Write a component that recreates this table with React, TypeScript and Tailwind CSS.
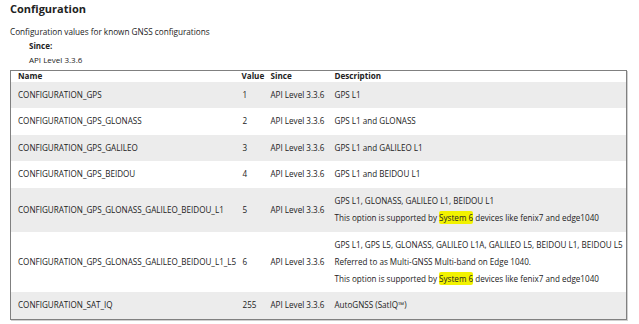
import React from "react";

const HL = ({ children }: { children: React.ReactNode }) => (
  <span className="bg-[#f2f200] rounded-[2px] py-[1px]">{children}</span>
);

type Row = { name: string; value: string; desc: React.ReactNode[] };

const rows: Row[] = [
  { name: "CONFIGURATION_GPS", value: "1", desc: ["GPS L1"] },
  { name: "CONFIGURATION_GPS_GLONASS", value: "2", desc: ["GPS L1 and GLONASS"] },
  { name: "CONFIGURATION_GPS_GALILEO", value: "3", desc: ["GPS L1 and GALILEO L1"] },
  { name: "CONFIGURATION_GPS_BEIDOU", value: "4", desc: ["GPS L1 and BEIDOU L1"] },
  {
    name: "CONFIGURATION_GPS_GLONASS_GALILEO_BEIDOU_L1",
    value: "5",
    desc: [
      "GPS L1, GLONASS, GALILEO L1, BEIDOU L1",
      <>This option is supported by <HL>System 6</HL> devices like fenix7 and edge1040</>,
    ],
  },
  {
    name: "CONFIGURATION_GPS_GLONASS_GALILEO_BEIDOU_L1_L5",
    value: "6",
    desc: [
      "GPS L1, GPS L5, GLONASS, GALILEO L1A, GALILEO L5, BEIDOU L1, BEIDOU L5",
      "Referred to as Multi-GNSS Multi-band on Edge 1040.",
      <>This option is supported by <HL>System 6</HL> devices like fenix7 and edge1040</>,
    ],
  },
  { name: "CONFIGURATION_SAT_IQ", value: "255", desc: ["AutoGNSS (SatIQ™)"] },
];

export default function App() {
  return (
    <div
      className="w-[639px] h-[324px] bg-white text-[#222] overflow-hidden pl-[10px] pt-[1px]"
      style={{ fontFamily: '"Open Sans", "Noto Sans", sans-serif' }}
    >
      <h2 className="text-[11px] font-bold leading-[16px]">Configuration</h2>
      <p className="text-[8.2px] leading-[11px] mt-[8.5px]">Configuration values for known GNSS configurations</p>
      <div className="pl-[19px] mt-[3.5px] text-[8px] leading-[11px]">
        <div className="font-bold">Since:</div>
        <div className="mt-[3px]">API Level 3.3.6</div>
      </div>
      <table className="mt-[4.5px] w-[617px] table-fixed border-collapse border border-[#808080] shadow-[1px_1px_0_#d0d0d0] text-[8.1px] leading-[10.6px]">
        <colgroup>
          <col className="w-[230px]" />
          <col className="w-[29px]" />
          <col className="w-[64px]" />
          <col />
        </colgroup>
        <thead>
          <tr className="bg-white">
            <th className="text-left font-bold pl-[7px] py-[0.25px]">Name</th>
            <th className="text-left font-bold pl-[1px]">Value</th>
            <th className="text-left font-bold pl-[1px]">Since</th>
            <th className="text-left font-bold pl-[1px]">Description</th>
          </tr>
        </thead>
        <tbody>
          {rows.map((r, i) => (
            <tr key={r.name} className={i % 2 === 0 ? "bg-[#ececec]" : "bg-white"}>
              <td className="pl-[7px] align-middle whitespace-nowrap">{r.name}</td>
              <td className="pl-[2px] align-middle">{r.value}</td>
              <td className="pl-[1px] align-middle whitespace-nowrap">API Level 3.3.6</td>
              <td className="pl-[1px] py-[8px] align-middle whitespace-nowrap">
                <div className="flex flex-col gap-[6.5px]">
                  {r.desc.map((d, j) => (
                    <div key={j}>{d}</div>
                  ))}
                </div>
              </td>
            </tr>
          ))}
        </tbody>
      </table>
    </div>
  );
}
